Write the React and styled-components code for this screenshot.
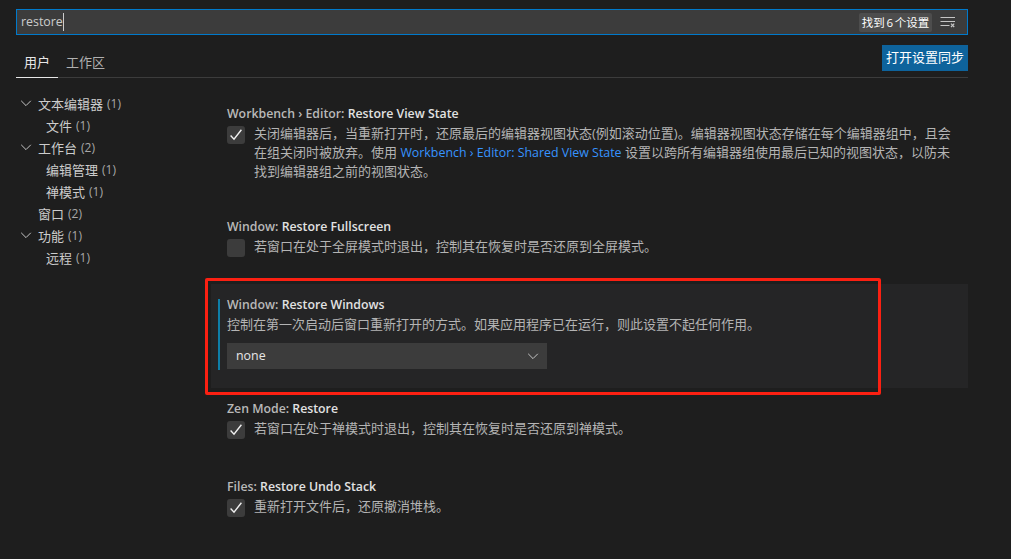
import styled, { createGlobalStyle } from "styled-components";

const GlobalStyle = createGlobalStyle`
  html, body {
    margin: 0;
    height: 100%;
    background: #1e1e1e;
  }
  * {
    box-sizing: border-box;
  }
`;

const Page = styled.div`
  width: 1011px;
  height: 559px;
  overflow: hidden;
  padding: 9px 43px 0 16px;
  background: #1e1e1e;
  color: #cccccc;
  font-family: "Open Sans", "Noto Sans CJK SC", sans-serif;
  font-size: 13px;
`;

const SearchBox = styled.div`
  display: flex;
  align-items: center;
  height: 26px;
  padding: 0 11px 0 4px;
  background: #3c3c3c;
  border: 1px solid #007acc;
`;

const SearchText = styled.span`
  flex: 1;
  font-size: 12.4px;
  line-height: 18px;
  color: #cccccc;
`;

const Caret = styled.span`
  display: inline-block;
  width: 1px;
  height: 18px;
  background: #cccccc;
  vertical-align: top;
`;

const CountBadge = styled.span`
  display: flex;
  align-items: center;
  justify-content: center;
  width: 73px;
  height: 19px;
  margin-right: 8px;
  background: #4d4d4d;
  border-radius: 2px;
  color: #ffffff;
  font-size: 11.5px;
  white-space: nowrap;
  word-spacing: -1.2px;
`;

const TabBar = styled.div`
  display: flex;
  justify-content: space-between;
  height: 33px;
  margin-top: 10px;
  border-bottom: 1px solid #3c3c3c;
`;

const Tabs = styled.div`
  display: flex;
`;

const Tab = styled.div`
  height: 33px;
  padding: 8px 8px 0;
  line-height: 18px;
  color: ${({ $active }) => ($active ? "#e7e7e7" : "#b0b0b0")};
  border-bottom: 1px solid ${({ $active }) => ($active ? "#e7e7e7" : "transparent")};
`;

const SyncButton = styled.div`
  height: 26px;
  width: 86px;
  text-align: center;
  line-height: 25px;
  background: #0e639c;
  color: #ffffff;
`;

const Body = styled.div`
  display: flex;
`;

const Tree = styled.div`
  flex: none;
  width: 195px;
  padding-top: 14px;
`;

const TreeRow = styled.div`
  display: flex;
  align-items: center;
  height: 22px;
  padding-left: ${({ $depth }) => ($depth === 2 ? "30px" : "22px")};
  position: relative;
  color: #cccccc;
`;

const Count = styled.span`
  margin-left: 4px;
  color: #a8a8a8;
  font-size: 12px;
`;

const TreeChevron = styled.svg`
  position: absolute;
  left: 4px;
  top: 5px;
  width: 12px;
  height: 12px;
`;

const List = styled.div`
  flex: 1;
  min-width: 0;
  padding-top: 15px;
`;

const Setting = styled.div`
  position: relative;
  height: ${({ $height }) => $height}px;
  padding: 12px 16px;
  background: ${({ $focused }) => ($focused ? "#252526" : "transparent")};
`;

const FocusBar = styled.div`
  position: absolute;
  left: 7px;
  top: 15px;
  width: 2px;
  height: 71px;
  background: #0e7ea8;
`;

const RedFrame = styled.div`
  position: absolute;
  left: -6px;
  top: -6px;
  width: 676px;
  height: 117px;
  border: 3px solid #fb2012;
  border-radius: 2px;
  pointer-events: none;
`;

const Title = styled.div`
  height: 18px;
  line-height: 18px;
  font-size: 12.3px;
  font-weight: 600;
  color: #b9b9b9;
  white-space: nowrap;
`;

const TitleStrong = styled.span`
  color: #e2e2e2;
`;

const CheckRow = styled.div`
  display: flex;
  gap: 9px;
  margin-top: 3px;
`;

const CheckBox = styled.div`
  flex: none;
  display: flex;
  align-items: center;
  justify-content: center;
  width: 18px;
  height: 18px;
  border-radius: 3px;
  background: #3c3c3c;
`;

const Description = styled.div`
  margin-top: -2px;
  line-height: 18.6px;
  color: #b4b4b4;
  white-space: nowrap;
`;

const PlainDescription = styled(Description)`
  margin-top: 1px;
`;

const Link = styled.span`
  color: #3794ff;
  font-size: 12.4px;
`;

const Select = styled.div`
  display: flex;
  align-items: center;
  justify-content: space-between;
  width: 320px;
  height: 26px;
  margin-top: 9px;
  padding: 0 8px 0 9px;
  background: #3c3c3c;
  color: #e7e7e7;
  font-size: 12.4px;
`;

const Chevron = ({ as: Comp = "svg", ...props }) => (
  <Comp viewBox="0 0 12 12" width="12" height="12" fill="none" {...props}>
    <path d="M1.2 3.8 6 8.6l4.8-4.8" stroke="#c5c5c5" strokeWidth="1" />
  </Comp>
);

const Check = () => (
  <svg viewBox="0 0 18 18" width="18" height="18" fill="none">
    <path d="M3.6 9.6 7 13.2 14.4 3.8" stroke="#f0f0f0" strokeWidth="1.4" />
  </svg>
);

const ClearFilters = () => (
  <svg viewBox="0 0 16 12" width="16" height="12" fill="none">
    <path d="M0.5 1.5h14.5M0.5 5.5h14.5M0.5 9.5h9" stroke="#c5c5c5" strokeWidth="1" />
    <path d="M11 7.6l3.2 3.4M14.2 7.6 11 11" stroke="#c5c5c5" strokeWidth="1.2" />
  </svg>
);

const tree = [
  { label: "文本编辑器", n: 1, open: true },
  { label: "文件", n: 1, depth: 2 },
  { label: "工作台", n: 2, open: true },
  { label: "编辑管理", n: 1, depth: 2 },
  { label: "禅模式", n: 1, depth: 2 },
  { label: "窗口", n: 2 },
  { label: "功能", n: 1, open: true },
  { label: "远程", n: 1, depth: 2 },
];

export default function App() {
  return (
    <Page>
      <GlobalStyle />
      <SearchBox>
        <SearchText>
          restore
          <Caret />
        </SearchText>
        <CountBadge>找到 6 个设置</CountBadge>
        <ClearFilters />
      </SearchBox>
      <TabBar>
        <Tabs>
          <Tab $active>用户</Tab>
          <Tab>工作区</Tab>
        </Tabs>
        <SyncButton>打开设置同步</SyncButton>
      </TabBar>
      <Body>
        <Tree>
          {tree.map((item) => (
            <TreeRow key={item.label} $depth={item.depth}>
              {item.open && <Chevron as={TreeChevron} />}
              {item.label}
              <Count>({item.n})</Count>
            </TreeRow>
          ))}
        </Tree>
        <List>
          <Setting $height={113}>
            <Title>
              Workbench › Editor: <TitleStrong>Restore View State</TitleStrong>
            </Title>
            <CheckRow>
              <CheckBox>
                <Check />
              </CheckBox>
              <Description>
                关闭编辑器后，当重新打开时，还原最后的编辑器视图状态(例如滚动位置)。编辑器视图状态存储在每个编辑器组中，且会
                <br />
                在组关闭时被放弃。使用 <Link>Workbench › Editor: Shared View State</Link> 设置以跨所有编辑器组使用最后已知的视图状态，以防未
                <br />
                找到编辑器组之前的视图状态。
              </Description>
            </CheckRow>
          </Setting>
          <Setting $height={78}>
            <Title>
              Window: <TitleStrong>Restore Fullscreen</TitleStrong>
            </Title>
            <CheckRow>
              <CheckBox />
              <Description>若窗口在处于全屏模式时退出，控制其在恢复时是否还原到全屏模式。</Description>
            </CheckRow>
          </Setting>
          <Setting $height={104} $focused>
            <FocusBar />
            <Title>
              Window: <TitleStrong>Restore Windows</TitleStrong>
            </Title>
            <PlainDescription>控制在第一次启动后窗口重新打开的方式。如果应用程序已在运行，则此设置不起任何作用。</PlainDescription>
            <Select>
              none
              <Chevron />
            </Select>
            <RedFrame />
          </Setting>
          <Setting $height={78}>
            <Title>
              Zen Mode: <TitleStrong>Restore</TitleStrong>
            </Title>
            <CheckRow>
              <CheckBox>
                <Check />
              </CheckBox>
              <Description>若窗口在处于禅模式时退出，控制其在恢复时是否还原到禅模式。</Description>
            </CheckRow>
          </Setting>
          <Setting $height={78}>
            <Title>
              Files: <TitleStrong>Restore Undo Stack</TitleStrong>
            </Title>
            <CheckRow>
              <CheckBox>
                <Check />
              </CheckBox>
              <Description>重新打开文件后，还原撤消堆栈。</Description>
            </CheckRow>
          </Setting>
        </List>
      </Body>
    </Page>
  );
}
